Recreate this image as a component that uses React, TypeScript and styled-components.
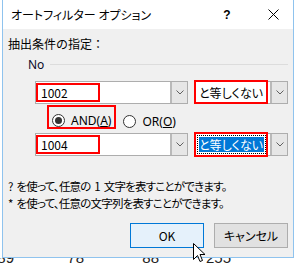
import styled, { createGlobalStyle } from "styled-components";

const GlobalStyle = createGlobalStyle`
  html, body {
    margin: 0;
    background: #fff;
  }
  body {
    font-family: "Noto Sans CJK JP", "Noto Sans", sans-serif;
    font-feature-settings: "palt";
    color: #000;
  }
`;

const Screen = styled.div`
  position: relative;
  width: 296px;
  height: 265px;
  overflow: hidden;
  background: #fff;
`;

const Window = styled.div`
  margin-left: 2px;
  width: 292px;
  height: 258px;
  box-sizing: border-box;
  border: 1px solid #8fc3ee;
  border-top: none;
  background: #f0f0f0;
  display: flex;
  flex-direction: column;
`;

const TitleBar = styled.div`
  height: 29px;
  flex-shrink: 0;
  background: #fff;
  display: flex;
  align-items: center;
  padding-left: 8px;
`;

const Title = styled.span`
  font-size: 12px;
  line-height: 16px;
`;

const TitleButton = styled.div<{ $w: number }>`
  width: ${(p) => p.$w}px;
  height: 29px;
  display: flex;
  align-items: center;
  justify-content: center;
  font-size: 13px;
`;

const HelpButton = styled(TitleButton)`
  margin-left: auto;
  font-family: "Liberation Sans", sans-serif;
  font-weight: bold;
  font-size: 12px;
`;

const CloseButton = styled(TitleButton)`
  margin-left: 11px;
`;

const Body = styled.div`
  flex: 1;
  padding: 0 5px;
  display: flex;
  flex-direction: column;
  font-size: 12px;
`;

const Heading = styled.div`
  margin-top: 7px;
  line-height: 16px;
  font-feature-settings: normal;
`;

const GroupHeader = styled.div`
  margin: 4px 0 0 20px;
  height: 16px;
  display: flex;
  align-items: center;
  font-family: "Noto Sans", sans-serif;
  color: #0a0a2a;
`;

const GroupLine = styled.div`
  flex: 1;
  height: 1px;
  margin-left: 6px;
  background: #dcdcdc;
`;

const ConditionRow = styled.div<{ $top: number }>`
  margin: ${(p) => p.$top}px 0 0 27px;
  display: flex;
  gap: 6px;
`;

const Combo = styled.div<{ $w: number }>`
  position: relative;
  width: ${(p) => p.$w}px;
  height: 23px;
  box-sizing: border-box;
  border: 1px solid #adadad;
  background: #fff;
  display: flex;
`;

const ComboText = styled.div`
  flex: 1;
  display: flex;
  align-items: center;
  padding-left: 4px;
  position: relative;
`;

const DropButton = styled.div`
  width: 15px;
  background: #e6e6e6;
  border-left: 2px solid #b9b9b9;
  display: flex;
  align-items: center;
  justify-content: center;
`;

const Marked = styled.span<{ $w: number }>`
  box-sizing: border-box;
  width: ${(p) => p.$w}px;
  height: 19px;
  margin-left: -4px;
  padding-left: 3px;
  border: 2px solid #ff0000;
  display: flex;
  align-items: center;
`;

const MarkOverlay = styled.div<{ $w: number; $h: number }>`
  position: absolute;
  left: -1px;
  top: -2px;
  width: ${(p) => p.$w}px;
  height: ${(p) => p.$h}px;
  box-sizing: border-box;
  border: 2px solid #ff0000;
  pointer-events: none;
`;

const Selected = styled.span`
  background: #0078d7;
  color: #fff;
  height: 15px;
  line-height: 15px;
  padding-right: 1px;
  outline: 1px dotted #000;
  outline-offset: 1px;
`;

const RadioRow = styled.div`
  margin: 1px 0 0 39px;
  height: 24px;
  display: flex;
  align-items: flex-start;
  gap: 7px;
`;

const RadioLabel = styled.label<{ $marked?: boolean }>`
  box-sizing: border-box;
  height: 24px;
  display: flex;
  align-items: center;
  gap: 6px;
  padding: ${(p) => (p.$marked ? "7px 3px 0 3px" : "9px 0 0 0")};
  border: ${(p) => (p.$marked ? "2px solid #ff0000" : "none")};
  font-family: "Noto Sans", sans-serif;
  font-size: 12px;
  line-height: 13px;
`;

const RadioCircle = styled.span<{ $on?: boolean }>`
  box-sizing: border-box;
  width: 13px;
  height: 13px;
  border-radius: 50%;
  border: 1px solid #333;
  background: #fff;
  display: flex;
  align-items: center;
  justify-content: center;
  &::after {
    content: "";
    width: 7px;
    height: 7px;
    border-radius: 50%;
    background: ${(p) => (p.$on ? "#333" : "transparent")};
  }
`;

const Hint = styled.div<{ $top: number }>`
  margin-top: ${(p) => p.$top}px;
  line-height: 17px;
  font-size: 11.5px;
  letter-spacing: -0.8px;
  word-spacing: 2px;
  white-space: nowrap;
`;

const ButtonRow = styled.div`
  margin-top: 11px;
  display: flex;
  justify-content: flex-end;
  gap: 10px;
`;

const Button = styled.div<{ $primary?: boolean }>`
  box-sizing: border-box;
  width: 74px;
  height: 25px;
  display: flex;
  align-items: center;
  justify-content: center;
  border: 1px solid ${(p) => (p.$primary ? "#0078d7" : "#adadad")};
  background: ${(p) => (p.$primary ? "#e5f1fb" : "#e1e1e1")};
  font-size: 12px;
`;

const SheetStrip = styled.div`
  height: 7px;
  overflow: hidden;
  display: flex;
  margin-left: -54px;
`;

const Cell = styled.div<{ $w: number }>`
  width: ${(p) => p.$w}px;
  flex-shrink: 0;
  height: 7px;
  border-right: 1px solid #222;
  text-align: right;
  padding-right: 3px;
  box-sizing: border-box;
  font-family: "Liberation Sans", sans-serif;
  font-size: 15px;
  line-height: 15px;
  margin-top: -8px;
  color: #222;
`;

const Cursor = styled.svg`
  position: absolute;
  left: 193px;
  top: 243px;
`;

const Chevron = () => (
  <svg width="8" height="5" viewBox="0 0 8 5">
    <path d="M0.5 0.5 L4 4 L7.5 0.5" fill="none" stroke="#606060" strokeWidth="1" />
  </svg>
);

export default function App() {
  return (
    <Screen>
      <GlobalStyle />
      <Window>
        <TitleBar>
          <Title>オートフィルター オプション</Title>
          <HelpButton $w={30}>?</HelpButton>
          <CloseButton $w={40}>
            <svg width="11" height="11" viewBox="0 0 11 11">
              <path d="M0.5 0.5 L10.5 10.5 M10.5 0.5 L0.5 10.5" stroke="#000" strokeWidth="1" />
            </svg>
          </CloseButton>
        </TitleBar>
        <Body>
          <Heading>抽出条件の指定：</Heading>
          <GroupHeader>
            <span>No</span>
            <GroupLine />
          </GroupHeader>

          <ConditionRow $top={9}>
            <Combo $w={153}>
              <ComboText>
                <Marked $w={64}>1002</Marked>
              </ComboText>
              <DropButton>
                <Chevron />
              </DropButton>
            </Combo>
            <Combo $w={94}>
              <ComboText>と等しくない</ComboText>
              <DropButton>
                <Chevron />
              </DropButton>
              <MarkOverlay $w={74} $h={24} />
            </Combo>
          </ConditionRow>

          <RadioRow>
            <RadioLabel $marked>
              <RadioCircle $on />
              <span>
                AND(<u>A</u>)
              </span>
            </RadioLabel>
            <RadioLabel>
              <RadioCircle />
              <span>
                OR(<u>O</u>)
              </span>
            </RadioLabel>
          </RadioRow>

          <ConditionRow $top={4}>
            <Combo $w={153}>
              <ComboText>
                <Marked $w={64}>1004</Marked>
              </ComboText>
              <DropButton>
                <Chevron />
              </DropButton>
            </Combo>
            <Combo $w={94}>
              <ComboText>
                <Selected>と等しくない</Selected>
              </ComboText>
              <DropButton>
                <Chevron />
              </DropButton>
              <MarkOverlay $w={74} $h={25} />
            </Combo>
          </ConditionRow>

          <Hint $top={22}>? を使って、任意の 1 文字を表すことができます。</Hint>
          <Hint $top={0}>* を使って、任意の文字列を表すことができます。</Hint>

          <ButtonRow>
            <Button $primary>OK</Button>
            <Button>キャンセル</Button>
          </ButtonRow>
        </Body>
      </Window>
      <SheetStrip>
        <Cell $w={72}>89</Cell>
        <Cell $w={70}>78</Cell>
        <Cell $w={75}>88</Cell>
        <Cell $w={72}>255</Cell>
      </SheetStrip>
      <Cursor width="13" height="21" viewBox="0 0 13 21">
        <path
          d="M0.5 0.5 L0.5 16.5 L4.5 12.5 L7 18.5 L9.5 17.5 L7 11.5 L12 11.5 Z"
          fill="#fff"
          stroke="#000"
          strokeWidth="1"
          strokeLinejoin="miter"
        />
      </Cursor>
    </Screen>
  );
}
